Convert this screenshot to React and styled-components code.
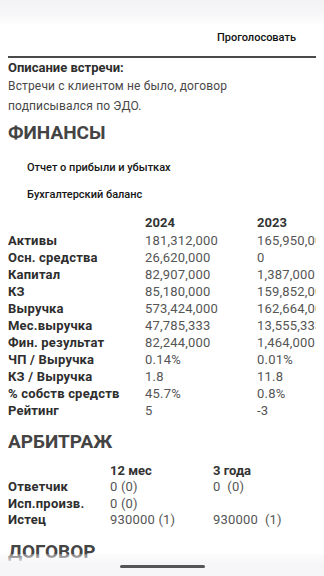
import React from 'react';
import styled, { createGlobalStyle } from 'styled-components';

const GlobalStyle = createGlobalStyle`
    html, body {
        margin: 0;
        padding: 0;
        background: #fff;
        font-family: Roboto, "Noto Sans", "Liberation Sans", sans-serif;
    }
`;

const Page = styled.div`
    position: relative;
    width: 324px;
    height: 576px;
    overflow: hidden;
    background: #fff;
`;

const TopFade = styled.div`
    position: absolute;
    left: 0;
    right: 0;
    top: 0;
    height: 26px;
    background: linear-gradient(#f3f3f6 0%, #f7f7f9 55%, rgba(255, 255, 255, 0) 100%);
    pointer-events: none;
`;

const BottomBar = styled.div`
    position: absolute;
    left: 0;
    right: 0;
    bottom: 0;
    height: 22px;
    background: linear-gradient(rgba(246, 245, 248, 0.3), #f6f5f8 45%);
    display: flex;
    justify-content: center;
    align-items: flex-start;
`;

const Handle = styled.div`
    margin-top: 11px;
    width: 85px;
    height: 3px;
    border-radius: 2px;
    background: #555;
`;

const VoteRow = styled.div`
    display: flex;
    justify-content: flex-end;
    padding: 31px 28px 0 0;
    margin-bottom: 11px;
`;

const VoteButton = styled.button`
    border: none;
    background: none;
    padding: 0;
    font-family: inherit;
    font-size: 11px;
    font-weight: 500;
    line-height: 14px;
    color: #111;
`;

const Divider = styled.hr`
    margin: 0 8px;
    border: none;
    height: 2px;
    background: #4a4a4a;
`;

const Content = styled.div`
    padding: 0 8px;
`;

const Label = styled.div`
    font-size: 13px;
    font-weight: 700;
    line-height: 17px;
    color: #2e2e2e;
    margin-top: 1px;
`;

const Text = styled.div`
    max-width: 250px;
    font-size: 12px;
    line-height: 20px;
    color: #484848;
    letter-spacing: 0.15px;
`;

const SectionTitle = styled.h2`
    margin: ${p => p.$top}px 0 0;
    font-size: 19px;
    font-weight: 700;
    line-height: 24px;
    color: #444;
`;

const Reports = styled.div`
    display: flex;
    flex-direction: column;
    margin-top: 9px;
`;

const ReportLink = styled.div`
    height: 27px;
    line-height: 27px;
    padding-left: 19px;
    font-size: 11px;
    font-weight: 500;
    color: #151515;
`;

const Table = styled.div`
    display: grid;
    grid-template-columns: ${p => p.$cols};
    margin-top: ${p => p.$top}px;
    width: 308px;
    overflow: hidden;
    white-space: pre;
`;

const HeadCell = styled.div`
    font-size: 13px;
    font-weight: 700;
    color: #333;
    line-height: ${p => p.$h}px;
`;

const RowLabel = styled.div`
    font-size: 13px;
    font-weight: 700;
    color: #2e2e2e;
    line-height: ${p => p.$h}px;
    letter-spacing: 0.2px;
`;

const Cell = styled.div`
    font-size: 13px;
    color: #555;
    line-height: ${p => p.$h}px;
    letter-spacing: 0.2px;
    overflow: hidden;
`;

const finance = [
    ['Активы', '181,312,000', '165,950,000'],
    ['Осн. средства', '26,620,000', '0'],
    ['Капитал', '82,907,000', '1,387,000'],
    ['КЗ', '85,180,000', '159,852,000'],
    ['Выручка', '573,424,000', '162,664,000'],
    ['Мес.выручка', '47,785,333', '13,555,333'],
    ['Фин. результат', '82,244,000', '1,464,000'],
    ['ЧП / Выручка', '0.14%', '0.01%'],
    ['КЗ / Выручка', '1.8', '11.8'],
    ['% собств средств', '45.7%', '0.8%'],
    ['Рейтинг', '5', '-3'],
];

const arbitration = [
    ['Ответчик', '0 (0)', '0  (0)'],
    ['Исп.произв.', '0 (0)', ''],
    ['Истец', '930000 (1)', '930000  (1)'],
];

function renderRows(rows, h) {
    return rows.map(([label, a, b]) => (
        <React.Fragment key={label}>
            <RowLabel $h={h}>{label}</RowLabel>
            <Cell $h={h}>{a}</Cell>
            <Cell $h={h}>{b}</Cell>
        </React.Fragment>
    ));
}

export default function App() {
    return (
        <Page>
            <GlobalStyle />
            <TopFade />
            <VoteRow>
                <VoteButton>Проголосовать</VoteButton>
            </VoteRow>
            <Divider />
            <Content>
                <Label>Описание встречи:</Label>
                <Text>Встречи с клиентом не было, договор подписывался по ЭДО.</Text>

                <SectionTitle $top={5}>ФИНАНСЫ</SectionTitle>
                <Reports>
                    <ReportLink>Отчет о прибыли и убытках</ReportLink>
                    <ReportLink>Бухгалтерский баланс</ReportLink>
                </Reports>

                <Table $cols="137px 112px minmax(0, 1fr)" $top={6}>
                    <div />
                    <HeadCell $h={18}>2024</HeadCell>
                    <HeadCell $h={18}>2023</HeadCell>
                    {renderRows(finance, 17)}
                </Table>

                <SectionTitle $top={11}>АРБИТРАЖ</SectionTitle>
                <Table $cols="102px 103px minmax(0, 1fr)" $top={8}>
                    <div />
                    <HeadCell $h={17}>12 мес</HeadCell>
                    <HeadCell $h={17}>3 года</HeadCell>
                    {renderRows(arbitration, 16.5)}
                </Table>

                <SectionTitle $top={11}>ДОГОВОР</SectionTitle>
            </Content>
            <BottomBar>
                <Handle />
            </BottomBar>
        </Page>
    );
}
